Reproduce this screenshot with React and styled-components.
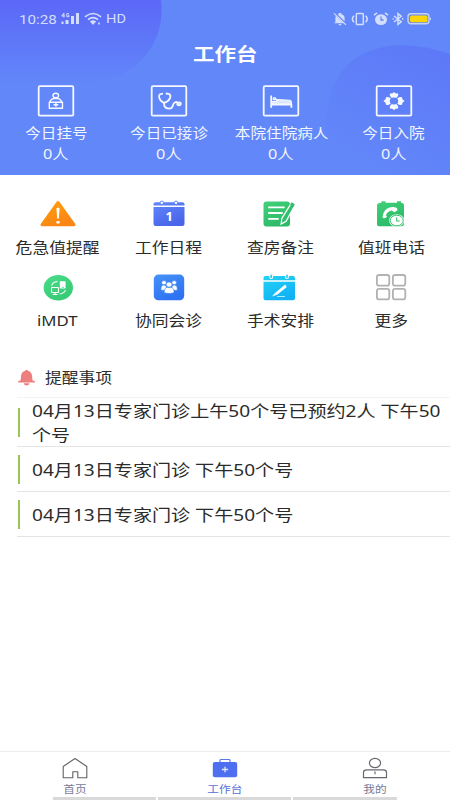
import React from 'react';
import styled, { createGlobalStyle } from 'styled-components';

const STRETCH = 1.18;

const GlobalStyle = createGlobalStyle`
  * { box-sizing: border-box; }
  html, body { margin: 0; padding: 0; background: #fff; }
  body { font-family: "Noto Sans", "Noto Sans CJK SC", sans-serif; }
  svg { display: block; }
`;

const Screen = styled.div`
  width: 450px;
  height: 800px;
  display: flex;
  flex-direction: column;
  background: #fff;
  overflow: hidden;
`;

const Text = styled.span`
  display: block;
  white-space: nowrap;
  font-size: ${p => p.$size / STRETCH}px;
  line-height: ${p => p.$line || 20}px;
  font-weight: ${p => p.$weight || 400};
  color: ${p => p.$color || '#2b2b2b'};
  transform: scaleX(${STRETCH});
  transform-origin: ${p => p.$origin || 'center'};
`;

const Header = styled.header`
  position: relative;
  height: 175px;
  flex: none;
  background: #6287f9;
  overflow: hidden;
`;

const Backdrop = styled.svg`
  position: absolute;
  inset: 0;
`;

const HeaderContent = styled.div`
  position: relative;
  display: flex;
  flex-direction: column;
`;

const StatusBar = styled.div`
  height: 38px;
  padding: 0 18px 0 19px;
  display: flex;
  justify-content: space-between;
`;

const StatusText = styled(Text)`
  font-family: Roboto, sans-serif;
  line-height: 39px;
  width: ${p => p.$width}px;
`;

const StatusGroup = styled.div`
  display: flex;
  align-items: center;
  gap: ${p => p.$gap}px;
`;

const TitleBar = styled.div`
  height: 47px;
  display: flex;
  justify-content: center;
  padding-top: 5px;
`;

const Title = styled(Text).attrs({ as: 'h1' })`
  margin: 0;
`;

const Stats = styled.div`
  display: grid;
  grid-template-columns: repeat(4, 1fr);
`;

const Stat = styled.div`
  display: flex;
  flex-direction: column;
  align-items: center;
`;

const StatLabel = styled(Text)`
  margin-top: 6px;
`;

const Menu = styled.nav`
  display: grid;
  grid-template-columns: repeat(4, 1fr);
  grid-auto-rows: 73.5px;
  width: 445px;
  margin-left: 2px;
  padding-top: 23px;
  height: 190px;
  flex: none;
`;

const MenuItem = styled.div`
  display: flex;
  flex-direction: column;
  align-items: center;
  gap: 9.500px;
`;

const Reminders = styled.section`
  flex: 1;
  padding-left: 17px;
`;

const ReminderHeader = styled.div`
  height: 33px;
  display: flex;
  align-items: center;
  gap: 9px;
  padding-bottom: 7px;
  border-bottom: 1px solid #f3f3f5;
`;

const Reminder = styled.div`
  height: ${p => (p.$tall ? 49 : 45)}px;
  display: flex;
  align-items: center;
  gap: 12px;
  padding-left: 1px;
  border-bottom: 1px solid #e4e4e6;
`;

const Marker = styled.div`
  width: 2px;
  height: 29px;
  flex: none;
  background: #98c65a;
`;

const ReminderText = styled(Text)`
  white-space: normal;
  flex: none;
  width: 352px;
  padding-top: 1px;
`;

const TabBar = styled.footer`
  height: 46px;
  flex: none;
  display: grid;
  grid-template-columns: repeat(3, 1fr);
  border-top: 1px solid #ececee;
`;

const Tab = styled.div`
  display: flex;
  flex-direction: column;
  align-items: center;
  padding-top: 4px;
`;

const Underlines = styled.div`
  height: 3px;
  flex: none;
  padding: 0 53px;
  display: grid;
  grid-template-columns: 103px 133px 104px;
  gap: 2px;
`;

const Underline = styled.div`
  background: #d9d9d9;
`;

const pale = '#d3defd';

const SignalIcon = () => (
  <svg width="19" height="14" viewBox="0 0 19 14" fill={pale}>
    <path d="M.5 9.5h2V12h-2zM4.500 8h3v4h-3zM10 4h3v8h-3zM15 1h3v11h-3z" />
    <path d="M2.800 1.100L.8 4h3M2.900 1v4.400M8 1.700H5.800v3H8V3.400H7" fill="none" stroke={pale} strokeWidth="1" />
  </svg>
);

const WifiIcon = () => (
  <svg width="18" height="14" viewBox="0 0 18 14" fill="none" stroke={pale} strokeWidth="1.600">
    <path d="M1 4.800Q9-1.800 17 4.800M4 7.600Q9 3.600 14 7.600M6.500 10Q9 8.200 11.500 10" />
    <path d="M8 10.500l1 1.200 1-1.200zM15 10.500v2" />
  </svg>
);

const MutedIcon = () => (
  <svg width="14" height="14" viewBox="0 0 14 14">
    <path d="M2.400 10V6Q2.500 2.700 5.700 2.200V1h2.600v1.200Q11.500 2.800 11.600 6v4l1.300 1.200H1.100zM5.500 12h3q-.2 1.400-1.500 1.400T5.500 12z" fill={pale} />
    <path d="M1.500 1l12 11.500" stroke="#6287f9" strokeWidth="2" />
    <path d="M1 1.300l12 11.500" stroke={pale} strokeWidth="1.100" />
  </svg>
);

const VibrateIcon = () => (
  <svg width="20" height="14" viewBox="0 0 20 14" fill="none" stroke={pale} strokeWidth="1.500">
    <rect x="6.300" y="1.500" width="7" height="11" rx=".8" />
    <path d="M4 3.800Q.8 7 4 10.300M15.600 3.800q3.200 3.200 0 6.500" />
  </svg>
);

const AlarmIcon = () => (
  <svg width="16" height="14" viewBox="0 0 16 14">
    <ellipse cx="8" cy="7.600" rx="6" ry="5.400" fill={pale} />
    <path d="M1 3.200L4 .9M15 3.200L12 .9" fill="none" stroke={pale} strokeWidth="1.600" />
    <path d="M8 4.500V8h2.600" fill="none" stroke="#6287f9" strokeWidth="1.300" />
  </svg>
);

const BluetoothIcon = () => (
  <svg width="12" height="14" viewBox="0 0 12 14" fill="none" stroke={pale} strokeWidth="1.500">
    <path d="M2 4l7.200 5.700L6 12.400V1.600l3.200 2.700L2 10" />
    <path d="M.6 7h1.200M10 7h1.400" />
  </svg>
);

const BatteryIcon = () => (
  <svg width="25" height="14" viewBox="0 0 25 14">
    <rect x="1" y="1.800" width="21" height="10" rx="3" fill="none" stroke="#c6d2ef" strokeWidth="1.400" />
    <rect x="3" y="3.600" width="17.500" height="6.600" rx="1.800" fill="#fbd50c" />
    <path d="M23 5.200q2 1.600 0 3.400z" fill={pale} />
  </svg>
);

const StatFrame = ({ children }) => (
  <svg width="38" height="32" viewBox="0 0 38 32" fill="none" stroke="#f5f8ff" strokeWidth="1.400" strokeLinejoin="round">
    <rect x="1.700" y="1.200" width="34.600" height="29.400" rx="1.200" strokeWidth="1.800" />
    {children}
  </svg>
);

const RegisterGlyph = () => (
  <>
    <ellipse cx="18.800" cy="10.400" rx="2.800" ry="2.200" />
    <path d="M12.300 22.500v-4.200l1.400-3q1.100-1.600 3.200-1.800h3.800q2.100.2 3.200 1.800l1.400 3M12.300 17.200h13.200v6H12.300zM18.900 17.800v4M16.500 19.800h4.800" />
  </>
);

const StethoscopeGlyph = () => (
  <>
    <path d="M13 8.500l-3 .8q-1.400 1-.8 3.300.8 3.500 4.700 5.200 4.200-.8 6.200-4.800 1-3.200-1.300-4.100l-3-.4" strokeWidth="1.800" />
    <path d="M14.200 17.500v3.200q1.200 3 4.800 3 3 0 3.800-2.900.8-4.100 4.600-4" strokeWidth="1.800" />
    <ellipse cx="29" cy="18.800" rx="2" ry="1.700" fill="#dfe8ff" />
  </>
);

const BedGlyph = () => (
  <>
    <path d="M9.200 10.500v12.200M9.200 19.500h20.200v3.200" strokeWidth="1.800" />
    <path d="M14.500 14.600l13.500.7q1.500.3 1.500 3.700H10v-2.500h4.500z" strokeWidth="1.100" fill="#dce6ff" />
    <ellipse cx="12.500" cy="13.800" rx="1.300" ry="1" />
  </>
);

const FlowerGlyph = () => (
  <g fill="#f5f8ff" stroke="none">
    <path d="M15 8.300q2.300.8 4-1.400 1.700 2.200 4 1.400 1.300 3.700-4 6-5.300-2.300-4-6z" />
    <path d="M15 23.700q2.300-.8 4 1.600 1.700-2.400 4-1.600 1.300-3.700-4-6-5.300 2.300-4 6z" />
    <path d="M11 12.200q.4 2-2.600 3.800 3 1.800 2.600 3.800 4.500 1 6-3.800-1.500-4.800-6-3.800z" />
    <path d="M27 12.200q-.4 2 2.600 3.800-3 1.800-2.600 3.800-4.500 1-6-3.800 1.500-4.800 6-3.800z" />
    <ellipse cx="19" cy="16" rx="4.200" ry="3.500" fill="#6284f9" />
  </g>
);

const MenuSvg = ({ id, from, to, children }) => (
  <svg width="38" height="30" viewBox="0 0 38 30">
    <defs>
      <linearGradient id={id} x1="0" y1="0" x2=".5" y2="1">
        <stop stopColor={from} />
        <stop offset="1" stopColor={to} />
      </linearGradient>
    </defs>
    {children}
  </svg>
);

const WarningIcon = () => (
  <MenuSvg id="warn" from="#ff9f10" to="#fa8614">
    <path d="M17.600 3.800q1.400-1.500 2.800 0l15.900 22.200q.7 2-1.600 2.200H3.300q-2.300-.2-1.600-2.200z" fill="url(#warn)" />
    <path d="M17.400 10.500q1.600-2 3.200 0l-.8 10h-1.600z" fill="#fff" />
    <ellipse cx="19" cy="24.300" rx="1.800" ry="1.400" fill="#fff" />
  </MenuSvg>
);

const ScheduleIcon = () => (
  <MenuSvg id="sched" from="#6287fc" to="#4965ea">
    <path d="M3.500 7.600V6q0-1.800 2-1.800h27q2 0 2 1.800v1.600zM3.500 9h31v17q0 2-2 2h-27q-2 0-2-2z" fill="url(#sched)" />
    <ellipse cx="11.800" cy="4.800" rx="1.800" ry="1.700" fill="#fff" stroke="#6080fa" strokeWidth="1" />
    <ellipse cx="26" cy="4.800" rx="1.800" ry="1.700" fill="#fff" stroke="#6080fa" strokeWidth="1" />
    <text x="19.200" y="23" fontSize="13" fontWeight="700" fill="#fff" textAnchor="middle">1</text>
  </MenuSvg>
);

const NotesIcon = () => (
  <MenuSvg id="notes" from="#43d078" to="#2cba69">
    <rect x="2.500" y="3.500" width="26.500" height="25" rx="3" fill="url(#notes)" />
    <path d="M7.200 9.300h16.500M7.200 15h14.500M7.200 20.800h10.500" stroke="#fff" strokeWidth="1.800" />
    <path d="M30.500 4.800L20.800 20.500l-.6 5.500 4.900-2.800L34 7z" fill="#2fc06c" stroke="#fff" strokeWidth="1.300" />
    <path d="M30.500 4.300l3.400 2-1.500 2.700-3.400-2z" fill="#35bd6f" />
  </MenuSvg>
);

const PhoneIcon = () => (
  <MenuSvg id="phone" from="#42d078" to="#2bba68">
    <path d="M9.500 4.700V3.200h4v1.500h11.500V3.200h4v1.500q3 .1 3 2.500V26q0 2.300-2.600 2.300H7.600Q5 28.300 5 26V7.200q0-2.400 4.500-2.500z" fill="url(#phone)" />
    <path d="M10.500 18.500q1-7 7-9 4-1.200 7.500.5l.5 2.200-3 2-3-1.700q-4.500 1-5.500 4.700l1 1.800-3 1.500q-1.500-.5-1.500-2z" fill="#fff" />
    <ellipse cx="24.700" cy="22.500" rx="7.600" ry="6.200" fill="#fff" />
    <ellipse cx="24.700" cy="22.500" rx="6.500" ry="5.300" fill="#fff" stroke="#36bf70" />
    <path d="M24.700 19.500v3.500h3" fill="none" stroke="#36bf70" strokeWidth="1.100" />
  </MenuSvg>
);

const ImdtIcon = () => (
  <MenuSvg id="imdt" from="#4bdc8a" to="#35cb73">
    <ellipse cx="19.300" cy="15.800" rx="14.700" ry="12.700" fill="url(#imdt)" />
    <g fill="none" stroke="#fff" strokeWidth="1.100">
      <rect x="12.500" y="15.500" width="7" height="5" rx=".7" />
      <path d="M16 20.700v1.700M13.700 22.500h4.800M12.800 13.800q.3-3.800 5.700-4.300M26.400 18q-.6 3.200-5.800 4" />
    </g>
    <rect x="20.800" y="9.300" width="5.800" height="7.200" rx=".7" fill="#fff" />
    <path d="M22.800 15.300h2" stroke="#42d280" strokeWidth=".8" />
  </MenuSvg>
);

const TeamIcon = () => (
  <MenuSvg id="team" from="#4592f7" to="#2f72f3">
    <rect x="3.800" y="2.600" width="30.400" height="25.600" rx="4.500" fill="url(#team)" />
    <g fill="#fff" stroke="#3481f4" strokeWidth=".6">
      <ellipse cx="14" cy="10.700" rx="2.400" ry="2.100" />
      <ellipse cx="24.200" cy="10.700" rx="2.400" ry="2.100" />
      <path d="M11 18.300q-.5-5 2.500-5.300 2.500 0 3 2.300l-1.500 3zM27.200 18.300q.5-5-2.500-5.300-2.500 0-3 2.300l1.500 3z" />
      <ellipse cx="19.100" cy="12.500" rx="2.900" ry="2.600" />
      <path d="M14.200 20.800q-.3-5.300 3.400-5.500 1.500.8 3 0 3.700.2 3.400 5.500-5 1.500-9.800 0z" />
    </g>
  </MenuSvg>
);

const SurgeryIcon = () => (
  <MenuSvg id="surgery" from="#22d3f5" to="#12b2f5">
    <path d="M2.500 8.200V6q0-2 2-2h27.500q2 0 2 2v2.200zM2.500 9.700h31.500v16.500q0 2-2 2H4.500q-2 0-2-2z" fill="url(#surgery)" />
    <ellipse cx="10.200" cy="5" rx="2" ry="2" fill="#fff" />
    <ellipse cx="26" cy="5" rx="2" ry="2" fill="#fff" />
    <path d="M10.200 2.800v3.200M26 2.800v3.200" stroke="#23c8ef" strokeWidth="1.600" />
    <path d="M24.200 12.500L14 21l-3 3.600 5.500-2L25.800 15z" fill="#fff" />
    <path d="M16 24.500h8" stroke="#baf0fc" strokeWidth=".9" />
  </MenuSvg>
);

const MoreIcon = () => (
  <svg width="38" height="30" viewBox="0 0 38 30" fill="none" stroke="#b2b2b2" strokeWidth="1.800">
    <rect x="4.900" y="3" width="12.400" height="10.600" rx="2.200" />
    <rect x="20.900" y="3" width="12.400" height="10.600" rx="2.200" />
    <rect x="4.900" y="16.800" width="12.400" height="10.600" rx="2.200" />
    <rect x="20.900" y="16.800" width="12.400" height="10.600" rx="2.200" />
  </svg>
);

const BellIcon = () => (
  <svg width="19" height="18" viewBox="0 0 19 18" fill="#ec8080">
    <path d="M8.200 1.800Q9.600-.2 11 1.800q3.900 1.200 4.100 5.400l.4 4 2.500 1.200v1.100H1v-1.100l2.600-1.200L4 7.200Q4.200 3 8.200 1.800zM6.600 14.200h6q-.6 2.200-3 2.200t-3-2.200z" />
  </svg>
);

const HomeIcon = () => (
  <svg width="26" height="24" viewBox="0 0 26 24" fill="none" stroke="#606068" strokeWidth="1.100" strokeLinejoin="round">
    <path d="M1.200 10.500L13 2.500l11.800 8v11.200h-9v-6h-5v6H1.200z" />
  </svg>
);

const KitIcon = () => (
  <svg width="26" height="24" viewBox="0 0 26 24">
    <path d="M8 6.500V4.200Q8 3.500 9 3.500h8q1 0 1 .7v2.300" fill="none" stroke="#5679ee" strokeWidth="1.200" />
    <rect x=".8" y="6" width="24.400" height="15.300" rx="2" fill="#4e70f0" />
    <path d="M13 10.800v5.400M9.900 13.500h6.200" stroke="#dfe7ff" strokeWidth="1.300" />
  </svg>
);

const PersonIcon = () => (
  <svg width="26" height="24" viewBox="0 0 26 24" fill="none" stroke="#686870" strokeWidth="1.200">
    <ellipse cx="13" cy="7" rx="5.600" ry="4.700" />
    <path d="M1.500 21.600v-5.300q0-2.500 3.200-2.500h16.600q3.200 0 3.200 2.500v5.300zM13 15.500v2.700" />
  </svg>
);

const stats = [
  ['今日挂号', RegisterGlyph],
  ['今日已接诊', StethoscopeGlyph],
  ['本院住院病人', BedGlyph],
  ['今日入院', FlowerGlyph],
];

const menu = [
  ['危急值提醒', WarningIcon],
  ['工作日程', ScheduleIcon],
  ['查房备注', NotesIcon],
  ['值班电话', PhoneIcon],
  ['iMDT', ImdtIcon],
  ['协同会诊', TeamIcon],
  ['手术安排', SurgeryIcon],
  ['更多', MoreIcon],
];

const reminders = [
  '04月13日专家门诊上午50个号已预约2人 下午50个号',
  '04月13日专家门诊 下午50个号',
  '04月13日专家门诊 下午50个号',
];

const tabs = [
  ['首页', HomeIcon, '#777b98'],
  ['工作台', KitIcon, '#5b6fd8'],
  ['我的', PersonIcon, '#777b98'],
];

export default function App() {
  return (
    <Screen>
      <GlobalStyle />
      <Header>
        <Backdrop width="450" height="175" viewBox="0 0 450 175">
          <defs>
            <linearGradient id="left" x1="0" y1="0" x2="0" y2="1">
              <stop offset="0" stopColor="#5b68f7" />
              <stop offset="1" stopColor="#6287f9" />
            </linearGradient>
            <linearGradient id="right" x1=".8" y1="0" x2=".3" y2=".9">
              <stop offset="0" stopColor="#5d79f7" />
              <stop offset="1" stopColor="#6287f9" />
            </linearGradient>
          </defs>
          <path d="M0 0H161Q164 27 151 48Q130 82 75 84H0z" fill="url(#left)" />
          <path d="M450 54Q424 45 398 45Q346 49 332 90Q320 130 330 175H450z" fill="url(#right)" />
        </Backdrop>
        <HeaderContent>
          <StatusBar>
            <StatusGroup $gap={4}>
              <StatusText $size={15.200} $width={38} $color={pale} $origin="left">10:28</StatusText>
              <SignalIcon />
              <WifiIcon />
              <StatusText $size={14.600} $width={20} $color={pale} $origin="left">HD</StatusText>
            </StatusGroup>
            <StatusGroup $gap={3}>
              <MutedIcon />
              <VibrateIcon />
              <AlarmIcon />
              <BluetoothIcon />
              <BatteryIcon />
            </StatusGroup>
          </StatusBar>
          <TitleBar>
            <Title $size={21.500} $line={22} $weight={700} $color="#fff">工作台</Title>
          </TitleBar>
          <Stats>
            {stats.map(([label, Glyph]) => (
              <Stat key={label}>
                <StatFrame><Glyph /></StatFrame>
                <StatLabel $size={15.600} $color="#f1f5ff">{label}</StatLabel>
                <Text $size={16.300} $line={22} $color="#f1f5ff">0人</Text>
              </Stat>
            ))}
          </Stats>
        </HeaderContent>
      </Header>
      <Menu>
        {menu.map(([label, Icon]) => (
          <MenuItem key={label}>
            <Icon />
            <Text $size={16.800}>{label}</Text>
          </MenuItem>
        ))}
      </Menu>
      <Reminders>
        <ReminderHeader>
          <BellIcon />
          <Text $size={16.800} $origin="left">提醒事项</Text>
        </ReminderHeader>
        {reminders.map((text, i) => (
          <Reminder key={i} $tall={i === 0}>
            <Marker />
            <ReminderText $size={19.100} $line={24} $origin="left">{text}</ReminderText>
          </Reminder>
        ))}
      </Reminders>
      <TabBar>
        {tabs.map(([label, Icon, color]) => (
          <Tab key={label}>
            <Icon />
            <Text $size={11.700} $line={18} $color={color}>{label}</Text>
          </Tab>
        ))}
      </TabBar>
      <Underlines>
        <Underline />
        <Underline />
        <Underline />
      </Underlines>
    </Screen>
  );
}
